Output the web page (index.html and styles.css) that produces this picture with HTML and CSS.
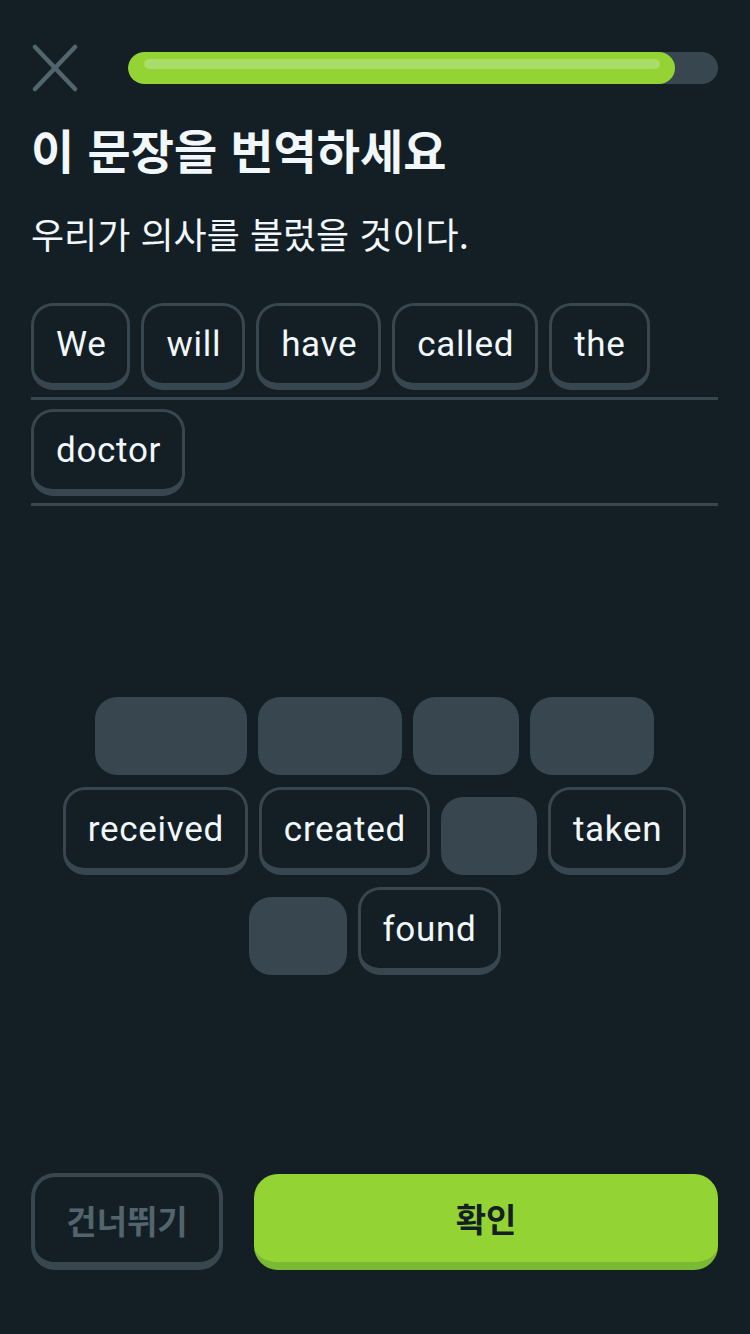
FILE: index.html
```html
<!DOCTYPE html>
<html lang="ko">
<head>
<meta charset="utf-8">
<title>이 문장을 번역하세요</title>
<link rel="stylesheet" href="styles.css">
</head>
<body>
<div class="page">
  <header class="top">
    <svg class="close" width="48" height="48" viewBox="0 0 48 48" aria-hidden="true">
      <path d="M4 3 L44 45 M44 3 L4 45" stroke="#52656d" stroke-width="4.5" stroke-linecap="round" fill="none"/>
    </svg>
    <div class="progress">
      <div class="progress-fill" style="width: 92.7%"><span class="progress-shine"></span></div>
    </div>
  </header>

  <h1 class="title">이 문장을 번역하세요</h1>
  <p class="prompt">우리가 의사를 불렀을 것이다.</p>

  <div class="answer">
    <div class="answer-row">
      <span class="chip">We</span>
      <span class="chip">will</span>
      <span class="chip">have</span>
      <span class="chip">called</span>
      <span class="chip">the</span>
    </div>
    <div class="answer-row">
      <span class="chip">doctor</span>
    </div>
  </div>

  <div class="bank">
    <div class="bank-row">
      <span class="slot" style="width:152px"></span>
      <span class="slot" style="width:144px"></span>
      <span class="slot" style="width:106px"></span>
      <span class="slot" style="width:124px"></span>
    </div>
    <div class="bank-row">
      <span class="chip">received</span>
      <span class="chip">created</span>
      <span class="slot" style="width:96px"></span>
      <span class="chip">taken</span>
    </div>
    <div class="bank-row">
      <span class="slot" style="width:98px"></span>
      <span class="chip">found</span>
    </div>
  </div>

  <div class="spacer"></div>

  <footer class="actions">
    <button class="btn btn-skip">건너뛰기</button>
    <button class="btn btn-check">확인</button>
  </footer>
</div>
</body>
</html>
```

FILE: styles.css
```css
html, body {
  margin: 0;
  padding: 0;
  background: #131f24;
}

body {
  width: 750px;
  height: 1334px;
  overflow: hidden;
  font-family: "Noto Sans CJK KR", "Noto Sans", sans-serif;
  color: #f1f7fb;
}

.page {
  box-sizing: border-box;
  height: 1334px;
  padding: 44px 32px 64px 31px;
  display: flex;
  flex-direction: column;
}

.top {
  display: flex;
  align-items: center;
  height: 48px;
  gap: 49px;
}

.close {
  flex: none;
  display: block;
}

.progress {
  flex: 1;
  height: 32px;
  border-radius: 16px;
  background: #37464f;
  position: relative;
  overflow: hidden;
}

.progress-fill {
  height: 100%;
  border-radius: 16px;
  background: #93d333;
  position: relative;
}

.progress-shine {
  position: absolute;
  left: 16px;
  right: 15px;
  top: 7px;
  height: 10px;
  border-radius: 5px;
  background: #aadc6a;
}

.title {
  margin: 30px 0 0 0;
  font-size: 47px;
  line-height: 53px;
  font-weight: 700;
  color: #f1f7fb;
}

.prompt {
  margin: 38px 0 0 0;
  font-size: 36px;
  line-height: 41px;
  font-weight: 400;
  color: #f1f7fb;
}

.answer {
  margin-top: 40px;
}

.answer-row {
  display: flex;
  gap: 11px;
  padding: 9px 0 7px 0;
  border-bottom: 3px solid #37464f;
}

.chip {
  box-sizing: border-box;
  height: 87px;
  display: inline-flex;
  align-items: center;
  padding: 0 21px 0 22px;
  border: 3px solid #37464f;
  border-bottom-width: 7px;
  border-radius: 22px;
  background: #131f24;
  font-family: Roboto, "Noto Sans", sans-serif;
  font-size: 35px;
  letter-spacing: 0.7px;
  color: #f1f7fb;
  white-space: nowrap;
}

.bank {
  margin-top: 181px;
  display: flex;
  flex-direction: column;
  gap: 12px;
}

.bank-row {
  display: flex;
  justify-content: center;
  align-items: flex-end;
  gap: 11px;
  height: 88px;
}

.bank-row .chip {
  height: 88px;
}

.slot {
  height: 78px;
  border-radius: 22px;
  background: #37464f;
}

.spacer {
  flex: 1;
}

.actions {
  display: flex;
  gap: 31px;
  align-items: flex-end;
}

.btn {
  box-sizing: border-box;
  height: 97px;
  border-radius: 24px;
  font-family: "Noto Sans CJK KR", sans-serif;
  font-size: 33px;
  font-weight: 700;
  display: flex;
  align-items: center;
  justify-content: center;
  padding: 0;
  cursor: pointer;
}

.btn-skip {
  width: 192px;
  background: #131f24;
  border: 4px solid #37464f;
  border-bottom-width: 8px;
  color: #52656d;
}

.btn-check {
  flex: 1;
  height: 96px;
  background: #93d333;
  border: none;
  border-bottom: 8px solid #79b933;
  color: #131f24;
}
```
